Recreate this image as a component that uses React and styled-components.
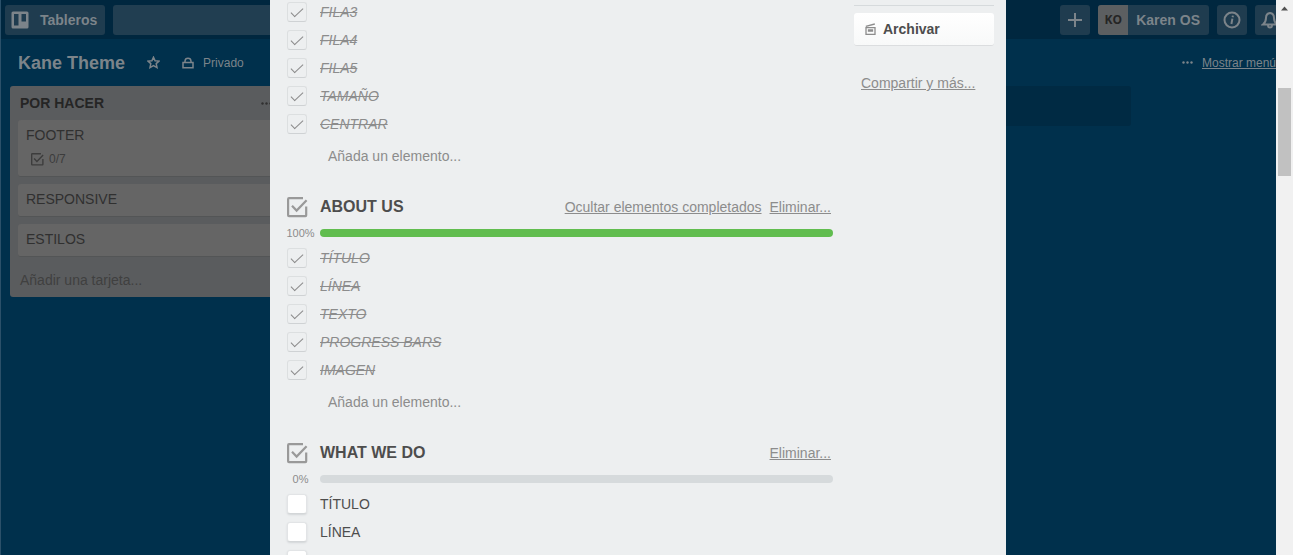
import React from "react";
import styled, { createGlobalStyle, css } from "styled-components";

const GlobalStyle = createGlobalStyle`
  *, *::before, *::after { box-sizing: border-box; }
  body {
    margin: 0;
    background: #00304c;
    color: #4d4d4d;
    font: 14px/20px "Liberation Sans", Arial, sans-serif;
  }
  button, input { font: inherit; color: inherit; }
  button { border: 0; padding: 0; background: none; text-align: left; cursor: pointer; }
  h1, h2, ul { margin: 0; padding: 0; }
  ul { list-style: none; }
  svg { display: block; flex: none; }
`;

const Page = styled.div`
  position: relative;
  height: 100vh;
  overflow: hidden;
`;

/* Board behind the dialog */
const Board = styled.div`
  min-height: 100%;
  background: #00304c;
  border-left: 1px solid #2b5069;
  color: #7c848a;
`;

const TopBar = styled.header`
  display: flex;
  justify-content: space-between;
  align-items: center;
  height: 39px;
  padding: 0 8px 0 4px;
  background: #00273f;
`;

const BarGroup = styled.div`
  display: flex;
  gap: 8px;
`;

const BarButton = styled.button`
  display: flex;
  align-items: center;
  justify-content: center;
  gap: 11px;
  min-width: 30px;
  height: 30px;
  padding: ${(p) => (p.$wide ? "0 8px 0 6px" : "0")};
  border-radius: 3px;
  background: #1f3c4f;
  font-weight: bold;
`;

const MemberButton = styled(BarButton)`
  padding-right: 9px;
  gap: 8px;
`;

const Avatar = styled.span`
  display: grid;
  place-items: center;
  width: 30px;
  height: 30px;
  border-radius: 3px 0 0 3px;
  background: #5c5f61;
  color: #252525;
  font: 700 12px/16px "Open Sans", sans-serif;
`;

const Search = styled.input`
  width: 200px;
  height: 30px;
  border: 0;
  border-radius: 3px;
  background: #213e51;
`;

const BoardHeader = styled.div`
  display: flex;
  justify-content: space-between;
  align-items: center;
  height: 47px;
  padding: 0 17px;
  font-size: 12px;
`;

const BoardInfo = styled.div`
  display: flex;
  align-items: center;
  gap: 22px;
`;

const BoardTitle = styled.h1`
  font-size: 18px;
  line-height: 24px;
`;

const IconLabel = styled.button`
  display: flex;
  align-items: center;
  gap: 9px;
`;

const MenuLink = styled.a`
  color: inherit;
`;

const Lists = styled.main`
  display: grid;
  grid-template-columns: repeat(4, 272px);
  align-items: start;
  gap: 11px;
  padding: 0 9px;
`;

const List = styled.section`
  padding: 0 8px 6px;
  border-radius: 3px;
  background: #5a5c5e;
  color: #303030;
`;

const ListHeader = styled.div`
  display: flex;
  justify-content: space-between;
  align-items: center;
  height: 34px;
  padding: 0 2px;
`;

const ListTitle = styled.h2`
  font-size: 14px;
  line-height: 20px;
  color: #252525;
`;

const Cards = styled.ul`
  display: grid;
  gap: 7px;
`;

const Card = styled.li`
  padding: 5px 8px 7px;
  border-radius: 3px;
  border-bottom: 1px solid #535556;
  background: #656565;
`;

const CardBadge = styled.div`
  display: flex;
  align-items: center;
  gap: 5px;
  height: 20px;
  margin-top: 4px;
  padding-left: 5px;
  color: #3c3c3c;
  font-size: 12px;
`;

const AddCard = styled.button`
  display: block;
  margin-top: 13px;
  margin-bottom: 1px;
  padding-left: 2px;
  color: #404040;
`;

const AddList = styled.div`
  grid-column: 4;
  height: 40px;
  border-radius: 3px;
  background: #002a43;
`;

/* Card dialog and its scroll area */
const Overlay = styled.div`
  position: absolute;
  inset: 0;
  display: flex;
`;

const Scroller = styled.div`
  flex: 1;
  display: flex;
  justify-content: center;
  overflow: hidden;
`;

const Dialog = styled.div`
  display: flex;
  align-items: flex-start;
  gap: 21px;
  width: 100%;
  max-width: 736px;
  padding: 0 12px 0 17px;
  background: #edeff0;
`;

const DialogMain = styled.div`
  flex: 1;
  display: grid;
  gap: 29px;
  padding-top: 2px;
`;

const Heading = styled.div`
  display: flex;
  align-items: center;
  gap: 8px;
  height: 24px;
  padding-right: 2px;
`;

const HeadingIcon = styled.span`
  width: 25px;
`;

const HeadingTitle = styled.h2`
  flex: 1;
  font-size: 16px;
  line-height: 24px;
`;

const QuietLink = styled.a`
  color: #8c8c8c;
`;

const ProgressRow = styled.div`
  display: flex;
  align-items: center;
  gap: 6px;
  height: 12px;
  margin: 8px 0 9px;
  color: #8c8c8c;
  font-size: 11px;
  line-height: 12px;
`;

const Percent = styled.span`
  width: 27px;
  display: flex;
  justify-content: center;
`;

const Track = styled.div`
  flex: 1;
  height: 8px;
  border-radius: 4px;
  overflow: hidden;
  background: #d6dadc;
`;

const Fill = styled.div`
  height: 100%;
  background: #61bd4f;
`;

const Items = styled.ul`
  display: grid;
  gap: 8px;
`;

const Item = styled.label`
  display: flex;
  align-items: center;
  gap: 13px;
  height: 20px;
  ${(p) =>
    p.$done &&
    css`
      color: #8c8c8c;
      font-style: italic;
      text-decoration: line-through;
    `}
`;

const Tick = styled.input`
  appearance: none;
  display: grid;
  place-items: center;
  flex: none;
  width: 20px;
  height: 20px;
  margin: 0;
  border: 1px solid #e2e4e6;
  border-bottom-color: #d3d6d8;
  border-radius: 3px;
  background: #fff;
  box-shadow: 0 1px 2px #d3d6d8;

  &:checked {
    border-color: #dcdfe0;
    border-bottom-color: #cfd2d4;
    background: #edeff0;
    box-shadow: none;
  }
  &:checked::after {
    content: "";
    width: 12px;
    height: 6px;
    margin-bottom: 3px;
    border: solid #8c8c8c;
    border-width: 0 0 1px 1px;
    transform: rotate(-43deg);
  }
`;

const AddItem = styled.button`
  display: block;
  margin-top: 12px;
  padding-left: 41px;
  color: #8c8c8c;
`;

const Sidebar = styled.aside`
  width: 140px;
  padding-top: 5px;
`;

const Divider = styled.hr`
  height: 1px;
  margin: 0 0 7px;
  border: 0;
  background: #d6dadc;
`;

const SideButton = styled.button`
  display: flex;
  align-items: center;
  gap: 7px;
  width: 100%;
  height: 33px;
  padding-left: 11px;
  border-bottom: 1px solid #dbdddf;
  border-radius: 3px;
  background: linear-gradient(#fff, #f8f9f9);
  font-weight: bold;
`;

const ShareRow = styled.div`
  margin-top: 27px;
  padding-left: 7px;
`;

const Scrollbar = styled.div`
  display: flex;
  flex-direction: column;
  align-items: center;
  width: 17px;
  padding-top: 6px;
  background: #f1f1f1;
`;

const Thumb = styled.div`
  width: 13px;
  height: 88px;
  margin-top: 77px;
  background: #c1c1c1;
`;

const Svg = ({ size, width = 2, box = 24, children }) => (
  <svg
    width={size}
    height={size}
    viewBox={`0 0 ${box} ${box}`}
    fill="none"
    stroke="currentColor"
    strokeWidth={width}
    aria-hidden="true"
  >
    {children}
  </svg>
);

const ChecklistIcon = ({ size, color = "#999" }) => (
  <svg width={size} height={size} viewBox="0 0 21 21" fill="none" stroke={color} strokeWidth="2.2" aria-hidden="true">
    <path d="M16 1.200H2Q1.100 1.200 1.100 2.200V18.200Q1.100 19.200 2 19.200H18.400Q19.200 19.200 19.200 18.200V9.500" />
    <path d="M5 8.800L9.600 13.600L19.600 3.200" />
  </svg>
);

const Dots = () => (
  <svg width="11" height="3" viewBox="0 0 11 3" fill="currentColor" aria-hidden="true">
    <circle cx="1.5" cy="1.5" r="1.2" />
    <circle cx="5.5" cy="1.5" r="1.2" />
    <circle cx="9.5" cy="1.5" r="1.2" />
  </svg>
);

const Checklist = ({ title, percent, items, done, hideable }) => (
  <section>
    {title && (
      <>
        <Heading>
          <HeadingIcon>
            <ChecklistIcon size={21} />
          </HeadingIcon>
          <HeadingTitle>{title}</HeadingTitle>
          {hideable && <QuietLink href="#ocultar">Ocultar elementos completados</QuietLink>}
          <QuietLink href="#eliminar">Eliminar...</QuietLink>
        </Heading>
        <ProgressRow>
          <Percent>{percent}%</Percent>
          <Track>
            <Fill style={{ width: `${percent}%` }} />
          </Track>
        </ProgressRow>
      </>
    )}
    <Items>
      {items.map((name) => (
        <li key={name}>
          <Item $done={done}>
            <Tick type="checkbox" defaultChecked={done} />
            {name}
          </Item>
        </li>
      ))}
    </Items>
    <AddItem>Añada un elemento...</AddItem>
  </section>
);

export default function App() {
  return (
    <Page>
      <GlobalStyle />
      <Board>
        <TopBar>
          <BarGroup>
            <BarButton $wide>
              <svg width="18" height="18" viewBox="0 0 18 18" fill="currentColor" aria-hidden="true">
                <path
                  fillRule="evenodd"
                  d="M2 .5H16Q17.500 .5 17.500 2V16Q17.500 17.500 16 17.500H2Q.5 17.500 .5 16V2Q.5 .5 2 .5ZM3 3V14.500H7.500V3ZM10.500 3V10.500H15V3Z"
                />
              </svg>
              Tableros
            </BarButton>
            <Search aria-label="Buscar" />
          </BarGroup>
          <BarGroup>
            <BarButton aria-label="Crear">
              <Svg size={16} box={16}>
                <path d="M8 1V15M1 8H15" />
              </Svg>
            </BarButton>
            <MemberButton>
              <Avatar>KO</Avatar>
              Karen OS
            </MemberButton>
            <BarButton aria-label="Información">
              <Svg size={18} box={18}>
                <circle cx="9" cy="9" r="7.5" />
                <path d="M9.400 7.600L8.400 13M9.900 4.600L9.600 6.200" />
              </Svg>
            </BarButton>
            <BarButton aria-label="Notificaciones">
              <Svg size={18} box={18}>
                <path d="M9 2Q13 2.500 13 7Q13 11 16 13.500H2Q5 11 5 7Q5 2.500 9 2ZM7 14Q7 16.500 9 16.500T11 14" />
              </Svg>
            </BarButton>
          </BarGroup>
        </TopBar>
        <BoardHeader>
          <BoardInfo>
            <BoardTitle>Kane Theme</BoardTitle>
            <IconLabel aria-label="Favorito">
              <Svg size={13} box={13} width={1.5}>
                <path d="M6.500 1.200L8.100 4.700L12 5.100L9.200 7.600L10 11.600L6.500 9.700L3 11.600L3.800 7.600L1 5.100L4.900 4.700Z" />
              </Svg>
            </IconLabel>
            <IconLabel>
              <Svg size={12} box={12} width={1.5}>
                <path d="M1 5.500H11V10.700H1ZM3 5.500V4Q3.200 1.200 6 1.200T9 4V5.500" />
              </Svg>
              Privado
            </IconLabel>
          </BoardInfo>
          <IconLabel as="div">
            <Dots />
            <MenuLink href="#menu">Mostrar menú</MenuLink>
          </IconLabel>
        </BoardHeader>
        <Lists>
          <List>
            <ListHeader>
              <ListTitle>POR HACER</ListTitle>
              <Dots />
            </ListHeader>
            <Cards>
              <Card>
                FOOTER
                <CardBadge>
                  <ChecklistIcon size={13} color="#3c3c3c" />
                  0/7
                </CardBadge>
              </Card>
              <Card>RESPONSIVE</Card>
              <Card>ESTILOS</Card>
            </Cards>
            <AddCard>Añadir una tarjeta...</AddCard>
          </List>
          <AddList />
        </Lists>
      </Board>
      <Overlay>
        <Scroller>
          <Dialog role="dialog" aria-label="Tarjeta">
            <DialogMain>
              <Checklist items={["FILA3", "FILA4", "FILA5", "TAMAÑO", "CENTRAR"]} done />
              <Checklist
                title="ABOUT US"
                percent={100}
                items={["TÍTULO", "LÍNEA", "TEXTO", "PROGRESS BARS", "IMAGEN"]}
                done
                hideable
              />
              <Checklist title="WHAT WE DO" percent={0} items={["TÍTULO", "LÍNEA", "TEXTO"]} done={false} />
            </DialogMain>
            <Sidebar>
              <Divider />
              <SideButton>
                <svg width="11" height="12" viewBox="0 0 11 12" fill="none" stroke="#8c8c8c" strokeWidth="1.3" aria-hidden="true">
                  <path d="M1 4.700H10V11.300H1ZM.8 3.300L9.800 1M3.500 6.800H7.500V8.200H3.500Z" />
                </svg>
                Archivar
              </SideButton>
              <ShareRow>
                <QuietLink href="#compartir">Compartir y más...</QuietLink>
              </ShareRow>
            </Sidebar>
          </Dialog>
        </Scroller>
        <Scrollbar>
          <svg width="7" height="5" viewBox="0 0 7 5" fill="#505050" aria-hidden="true">
            <path d="M0 4.500L3.500 .5L7 4.500Z" />
          </svg>
          <Thumb />
        </Scrollbar>
      </Overlay>
    </Page>
  );
}
